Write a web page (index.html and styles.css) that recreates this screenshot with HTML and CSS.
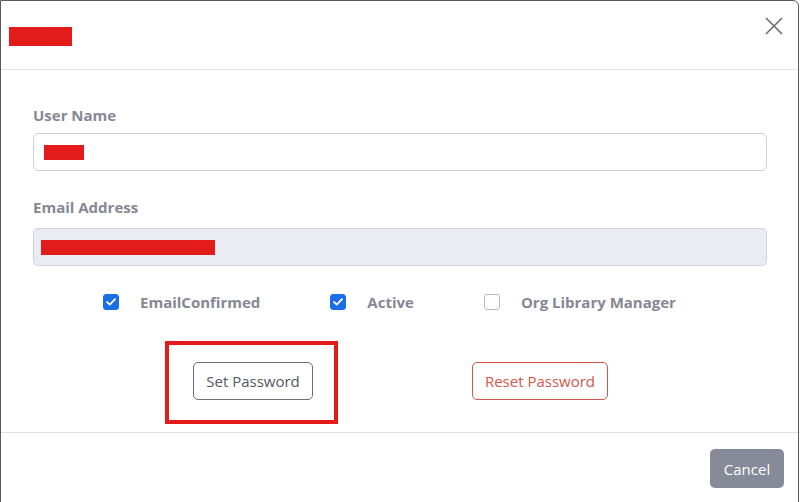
FILE: index.html
```html
<!DOCTYPE html>
<html>
<head>
<meta charset="utf-8">
<link rel="stylesheet" href="styles.css">
</head>
<body>
<div class="modal">
  <div class="modal-header">
    <span class="redact title-redact"></span>
    <button class="close" aria-label="Close">
      <svg width="18" height="18" viewBox="0 0 18 18"><path d="M1 1L17 17M17 1L1 17" stroke="#6b6b6b" stroke-width="1.6" fill="none"/></svg>
    </button>
  </div>
  <div class="modal-body">
    <div class="label label-first">User Name</div>
    <div class="input"><span class="redact name-redact"></span></div>
    <div class="label label-second">Email Address</div>
    <div class="input input-disabled"><span class="redact email-redact"></span></div>
    <div class="checks">
      <label class="check"><span class="box checked"><svg width="10" height="8" viewBox="0 0 10 8"><path d="M1 4L3.8 6.6L9 1.2" stroke="#fff" stroke-width="1.8" fill="none" stroke-linecap="round" stroke-linejoin="round"/></svg></span><span class="check-text">EmailConfirmed</span></label>
      <label class="check"><span class="box checked"><svg width="10" height="8" viewBox="0 0 10 8"><path d="M1 4L3.8 6.6L9 1.2" stroke="#fff" stroke-width="1.8" fill="none" stroke-linecap="round" stroke-linejoin="round"/></svg></span><span class="check-text">Active</span></label>
      <label class="check"><span class="box"></span><span class="check-text">Org Library Manager</span></label>
    </div>
    <div class="actions">
      <div class="highlight"><button class="btn btn-outline-secondary">Set Password</button></div>
      <button class="btn btn-outline-danger">Reset Password</button>
    </div>
  </div>
  <div class="modal-footer">
    <button class="btn btn-secondary">Cancel</button>
  </div>
</div>
</body>
</html>
```
FILE: styles.css
```css
* { box-sizing: border-box; }
html, body { margin: 0; padding: 0; background: #fff; }
body {
  width: 800px;
  height: 502px;
  overflow: hidden;
  font-family: "Open Sans", "Noto Sans", sans-serif;
}
.modal {
  width: 799px;
  height: 520px;
  border: 1px solid #5a5a5a;
  border-radius: 0 6px 0 0;
  background: #fff;
}
.redact {
  display: inline-block;
  background: #e31b1b;
}
.modal-header {
  height: 69px;
  border-bottom: 1px solid #dee2e6;
  display: flex;
  align-items: flex-start;
  justify-content: space-between;
  padding: 26px 15px 0 8px;
}
.title-redact { width: 63px; height: 19px; }
.close {
  border: 0;
  background: transparent;
  padding: 0;
  margin-top: -10px;
  width: 18px;
  height: 18px;
  cursor: pointer;
}
.modal-body {
  height: 363px;
  padding: 35px 31px 0 32px;
  border-bottom: 1px solid #dee2e6;
}
.label {
  font-size: 15px;
  line-height: 20px;
  font-weight: 700;
  color: #858894;
  height: 20px;
}
.label-first { margin-bottom: 8px; }
.label-second { margin-top: 26px; margin-bottom: 11px; }
.input {
  height: 38px;
  border: 1px solid #ced4da;
  border-radius: 5px;
  display: flex;
  align-items: center;
  padding-left: 10px;
}
.input-disabled { background: #e9ecf3; padding-left: 7px; }
.name-redact { width: 40px; height: 15px; }
.email-redact { width: 174px; height: 15px; }
.checks {
  margin-top: 26px;
  height: 20px;
  display: flex;
  align-items: center;
  padding-left: 70px;
  gap: 70px;
}
.check {
  display: flex;
  align-items: center;
  gap: 21px;
}
.box {
  width: 16px;
  height: 16px;
  border-radius: 3px;
  border: 1px solid #b5b9be;
  background: #fff;
  display: flex;
  align-items: center;
  justify-content: center;
}
.box.checked {
  background: #1a6ee6;
  border-color: #1a6ee6;
}
.check-text {
  font-size: 15px;
  line-height: 20px;
  font-weight: 700;
  color: #858894;
}
.actions {
  margin-top: 29px;
  display: flex;
  align-items: flex-start;
  padding-left: 132px;
  gap: 134px;
}
.highlight {
  border: 4px solid #e31b1b;
  padding: 17px 21px 20px 24px;
}
.btn {
  height: 38px;
  font-family: "Open Sans", "Noto Sans", sans-serif;
  font-size: 15px;
  border-radius: 5px;
  background: #fff;
  padding: 0;
  white-space: nowrap;
  cursor: pointer;
}
.btn-outline-secondary {
  width: 120px;
  border: 1px solid #6c6f74;
  color: #545860;
}
.btn-outline-danger {
  width: 136px;
  margin-top: 21px;
  border: 1px solid #d2584a;
  color: #d2584a;
}
.modal-footer {
  display: flex;
  justify-content: flex-end;
  padding: 16px 14px 0 0;
}
.btn-secondary {
  width: 74px;
  height: 39px;
  border: 0;
  background: #878a99;
  color: #fff;
}
```
